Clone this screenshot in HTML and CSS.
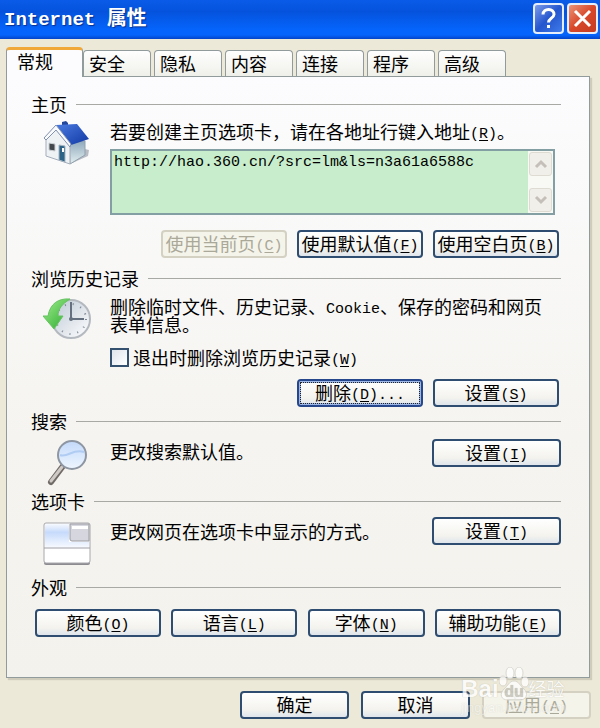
FILE: index.html
```html
<!DOCTYPE html>
<html lang="zh-CN">
  <head>
    <meta charset="UTF-8" />
    <meta name="viewport" content="width=device-width, initial-scale=1.0" />
    <title>Internet 属性</title>
    <link rel="stylesheet" href="styles.css">
  </head>
  <body>
    <!-- Title bar -->
    <header class="title-bar">
      <h1 class="title"><span class="title-latin">Internet </span>属性</h1>
      <button class="window-button help" type="button" aria-label="帮助">
        <svg width="27" height="27" viewBox="0 0 27 27">
          <path d="M8 9.500C8 2.500 19.500 3 19 9.500C18.800 13 13.500 13.500 13.500 17.500" fill="none" stroke="#fff" stroke-width="3" />
          <rect x="12" y="20" width="3" height="3" fill="#fff" />
        </svg>
      </button>
      <button class="window-button close" type="button" aria-label="关闭">
        <svg width="27" height="27" viewBox="0 0 27 27">
          <path d="M6 6L21 21M21 6L6 21" stroke="#fff" stroke-width="3" />
        </svg>
      </button>
    </header>

    <main>
      <!-- Tabs -->
      <nav class="tabs">
        <button class="tab active" type="button">常规</button>
        <button class="tab" type="button">安全</button>
        <button class="tab" type="button">隐私</button>
        <button class="tab" type="button">内容</button>
        <button class="tab" type="button">连接</button>
        <button class="tab" type="button">程序</button>
        <button class="tab" type="button">高级</button>
      </nav>

      <div class="panel">
        <!-- Home page -->
        <section class="group home">
          <h2 class="group-title">主页</h2>
          <div class="group-body">
            <svg class="icon" width="48" height="46" viewBox="0 0 48 46">
              <defs>
                <linearGradient id="roof" x1="0" y1="0" x2="1" y2="1">
                  <stop offset="0" stop-color="#4a7be0" />
                  <stop offset="1" stop-color="#1138a4" />
                </linearGradient>
                <linearGradient id="side" x1="0" y1="0" x2="0" y2="1">
                  <stop offset="0" stop-color="#8fa9bd" />
                  <stop offset="1" stop-color="#e4f0f0" />
                </linearGradient>
              </defs>
              <path d="M27 43L45 35L46 29L38 27Z" fill="#b9bcc4" />
              <path d="M26 22L42 20V34L27 43Z" fill="url(#side)" stroke="#90a0ae" />
              <path d="M3 17L13 5L27 21V43L3 35Z" fill="#eef2f5" stroke="#a4adb9" />
              <path d="M19 1L23 0L25 2V9H19Z" fill="#21469b" />
              <path d="M13 4L34 3L46 18L28 24Z" fill="url(#roof)" />
              <path d="M1 17L13 4L28 23L27 26L13 9L3 19Z" fill="#f9fbff" stroke="#8191af" />
              <path d="M6 22L12 23V30L6 29Z" fill="#42464d" stroke="#cbd0d5" />
              <path d="M16 24L22 25V41L16 39Z" fill="#2c6387" stroke="#a5b5c2" />
              <path d="M20 27V31" stroke="#fff" stroke-width="2" />
            </svg>
            <div class="content">
              <label class="text" for="address">若要创建主页选项卡，请在各地址行键入地址<span class="key">(<u>R</u>)</span>。</label>
              <div class="address-box">
                <textarea id="address" class="address" spellcheck="false">http://hao.360.cn/?src=lm&amp;ls=n3a61a6588c</textarea>
                <div class="scrollbar">
                  <button class="scroll-button" type="button" aria-label="向上滚动">
                    <svg width="14" height="10" viewBox="0 0 14 10"><path d="M2 8L7 3L12 8" fill="none" stroke="#c5bfba" stroke-width="3" /></svg>
                  </button>
                  <button class="scroll-button" type="button" aria-label="向下滚动">
                    <svg width="14" height="10" viewBox="0 0 14 10"><path d="M2 2L7 7L12 2" fill="none" stroke="#c5bfba" stroke-width="3" /></svg>
                  </button>
                </div>
              </div>
            </div>
          </div>
          <div class="buttons">
            <button class="button" type="button" disabled>使用当前页<span class="key">(<u>C</u>)</span></button>
            <button class="button" type="button">使用默认值<span class="key">(<u>F</u>)</span></button>
            <button class="button" type="button">使用空白页<span class="key">(<u>B</u>)</span></button>
          </div>
        </section>

        <!-- Browsing history -->
        <section class="group history">
          <h2 class="group-title">浏览历史记录</h2>
          <div class="group-body">
            <svg class="icon" width="48" height="44" viewBox="0 0 48 44">
              <defs>
                <linearGradient id="dial" x1="0" y1="0" x2="1" y2="1">
                  <stop offset="0" stop-color="#bcc7d4" />
                  <stop offset="1" stop-color="#ffffff" />
                </linearGradient>
                <linearGradient id="arrow" x1="0" y1="0" x2="1" y2="1">
                  <stop offset="0" stop-color="#a1ee8e" />
                  <stop offset="1" stop-color="#28a82c" />
                </linearGradient>
              </defs>
              <circle cx="28" cy="22" r="19" fill="url(#dial)" stroke="#b4b9c0" stroke-width="2" />
              <circle cx="28" cy="22" r="15" fill="none" stroke="#7d8792" stroke-width="2" stroke-dasharray="1 7" />
              <path d="M28 5V22H41" fill="none" stroke="#647080" stroke-width="2" />
              <circle cx="28" cy="22" r="2" fill="#647080" />
              <path d="M27 2C15 1 7 7 5 19H0L11 32L20 19H15C15 12 19 7 27 2Z" fill="url(#arrow)" stroke="#65c360" />
            </svg>
            <div class="content">
              <p class="text paragraph">删除临时文件、历史记录、<span class="key">Cookie</span>、保存的密码和网页表单信息。</p>
              <label class="option">
                <input class="checkbox" type="checkbox" />
                <span>退出时删除浏览历史记录<span class="key">(<u>W</u>)</span></span>
              </label>
            </div>
          </div>
          <div class="buttons">
            <button class="button default" type="button">删除<span class="key">(<u>D</u>)...</span></button>
            <button class="button" type="button">设置<span class="key">(<u>S</u>)</span></button>
          </div>
        </section>

        <!-- Search -->
        <section class="group search">
          <h2 class="group-title">搜索</h2>
          <div class="group-body">
            <svg class="icon" width="48" height="48" viewBox="0 0 48 48">
              <defs>
                <linearGradient id="lens" x1="0" y1="0" x2="0" y2="1">
                  <stop offset="0" stop-color="#c3d9fa" />
                  <stop offset="1" stop-color="#eef6ff" />
                </linearGradient>
              </defs>
              <path d="M20 27L8 43" stroke="#716b68" stroke-width="6" stroke-linecap="round" />
              <path d="M19 28L8 42" stroke="#cfcac6" stroke-width="3" stroke-linecap="round" />
              <circle cx="29" cy="16" r="14" fill="url(#lens)" stroke="#8d96a2" stroke-width="2" />
              <path d="M17 16C25 19 30 9 41 13" fill="none" stroke="#b0ccf3" stroke-width="2" />
            </svg>
            <div class="content">
              <p class="text">更改搜索默认值。</p>
            </div>
            <button class="button wide" type="button">设置<span class="key">(<u>I</u>)</span></button>
          </div>
        </section>

        <!-- Tabbed browsing -->
        <section class="group browsing">
          <h2 class="group-title">选项卡</h2>
          <div class="group-body">
            <svg class="icon" width="48" height="44" viewBox="0 0 48 44">
              <defs>
                <linearGradient id="tab-fill" x1="0" y1="0" x2="0" y2="1">
                  <stop offset="0" stop-color="#f6f9ff" />
                  <stop offset="0.350" stop-color="#c6dafb" />
                  <stop offset="1" stop-color="#f9fbff" />
                </linearGradient>
              </defs>
              <rect x="1" y="2" width="46" height="41" rx="2" fill="#8c8c90" />
              <rect x="1" y="1" width="46" height="40" rx="2" fill="#fff" stroke="#a8a8ad" />
              <path d="M2 2H26V20H46V26H2Z" fill="url(#tab-fill)" />
              <path d="M27 2H46V19H29Q27 19 27 17Z" fill="#d6d6de" stroke="#9c9ca3" />
              <path d="M29 4H45V7H29Z" fill="#fff" />
              <path d="M1 26H47" stroke="#a0a0a7" />
            </svg>
            <div class="content">
              <p class="text">更改网页在选项卡中显示的方式。</p>
            </div>
            <button class="button wide" type="button">设置<span class="key">(<u>T</u>)</span></button>
          </div>
        </section>

        <!-- Appearance -->
        <section class="group appearance">
          <h2 class="group-title">外观</h2>
          <div class="appearance-buttons">
            <button class="button" type="button">颜色<span class="key">(<u>O</u>)</span></button>
            <button class="button" type="button">语言<span class="key">(<u>L</u>)</span></button>
            <button class="button narrow" type="button">字体<span class="key">(<u>N</u>)</span></button>
            <button class="button" type="button">辅助功能<span class="key">(<u>E</u>)</span></button>
          </div>
        </section>
      </div>
    </main>

    <!-- Dialog buttons -->
    <footer class="footer">
      <button class="button" type="button">确定</button>
      <button class="button" type="button">取消</button>
      <button class="button" type="button" disabled>应用<span class="key">(<u>A</u>)</span></button>
      <div class="watermark">
        <div class="brand">
          <span class="brand-latin">Bai</span>
          <svg width="30" height="34" viewBox="0 0 30 34">
            <g fill="#fff" stroke="#d4d2c9">
              <ellipse cx="4" cy="14" rx="4" ry="5" />
              <ellipse cx="11" cy="6" rx="4" ry="6" />
              <ellipse cx="20" cy="6" rx="4" ry="6" />
              <ellipse cx="26" cy="15" rx="4" ry="5" />
              <path d="M15 14C20 14 21 19 25 22C30 27 27 33 21 33C17 33 13 33 9 33C2 33 0 27 5 22C9 19 10 14 15 14Z" />
            </g>
            <text class="paw-text" x="15" y="30" text-anchor="middle">du</text>
          </svg>
          <span class="brand-name">经验</span>
        </div>
        <div class="brand-site">jingyan.baidu.com</div>
      </div>
    </footer>
  </body>
</html>
```
FILE: styles.css
```css
* {
  box-sizing: border-box;
}

body {
  display: flex;
  flex-direction: column;
  min-height: 100vh;
  margin: 0;
  background-color: #ece9d8;
  color: #000;
  font-family: "Noto Sans CJK SC", sans-serif;
  font-size: 18px;
  line-height: 20px;
}

button,
textarea {
  margin: 0;
  color: inherit;
  font: inherit;
}

h1,
h2,
p {
  margin: 0;
  font-size: inherit;
  font-weight: normal;
}

/* Title bar */
.title-bar {
  display: flex;
  align-items: center;
  gap: 3px;
  height: 39px;
  padding: 0 2px 2px 4px;
  background: linear-gradient(#0a5be8, #0553dd 30%, #0564fb 75%, #0564fb 90%, #0343c8);
}

.title {
  flex: 1;
  color: #fff;
  font-size: 20px;
  font-weight: bold;
  text-shadow: 1px 1px 1px #062f8e;
  white-space: pre;
}

.title-latin {
  font-family: "Liberation Mono", monospace;
  font-size: 19px;
}

.window-button {
  display: flex;
  justify-content: center;
  align-items: center;
  width: 31px;
  height: 31px;
  padding: 0;
  border: 2px solid #e6edfb;
  border-radius: 4px;
}

.help {
  background: linear-gradient(135deg, #7d9cea, #2556ce 50%, #3e7bea);
}

.close {
  background: linear-gradient(135deg, #ec9477, #d8472a 50%, #c43c22);
}

main {
  padding: 9px 10px 0 6px;
}

/* Tabs */
.tabs {
  display: flex;
  align-items: flex-end;
  gap: 3px;
  height: 28px;
}

.tab {
  width: 68px;
  height: 26px;
  padding: 0 0 2px 5px;
  border: 1px solid #919b9c;
  border-bottom: 0;
  border-radius: 4px 4px 0 0;
  background: linear-gradient(#fefefe, #f0f0ea);
  text-align: left;
}

.tab.active {
  position: relative;
  z-index: 1;
  width: 77px;
  height: 30px;
  margin: 0 -3px -1px 0;
  padding: 0 0 5px 10px;
  border-top: 3px solid #f0a838;
  background: #fcfcfe;
}

/* Panel */
.panel {
  padding: 17px 28px 40px 24px;
  border: 1px solid #919b9c;
  box-shadow: 2px 2px 1px #cfccbc;
  background: linear-gradient(#fcfcfe, #f5f4f0 60%, #f3f2ed);
}

.group-title {
  display: flex;
  align-items: center;
  gap: 9px;
}

.group-title::after {
  content: "";
  flex: 1;
  height: 1px;
  background-color: #a8a8a5;
}

.group-body {
  display: flex;
  align-items: flex-start;
  padding-left: 12px;
}

.icon {
  flex: none;
  margin-right: 19px;
}

.content {
  flex: 1;
}

.text {
  display: block;
}

.key {
  font-family: "Liberation Mono", monospace;
  font-size: 15px;
  line-height: 0;
  vertical-align: 1px;
}

.key u {
  text-underline-offset: 2px;
}

/* Buttons */
.button {
  width: 126px;
  height: 28px;
  padding: 0 0 2px;
  border: 2px solid #2e4d70;
  border-radius: 4px;
  background: linear-gradient(#fff, #f4f3ee 70%, #dfe5ec);
  white-space: nowrap;
}

.button:disabled {
  border-color: #d4d1c3;
  background: #f5f4ea;
  color: #aaa899;
}

.button.default {
  outline: 1px dotted #222;
  outline-offset: -4px;
  border-color: #26478b;
  box-shadow: inset 0 0 0 2px #9db8e8;
}

.button.wide {
  width: 129px;
}

.buttons {
  display: flex;
  justify-content: flex-end;
  gap: 10px;
  padding-right: 2px;
}

/* Home page */
.home .group-body {
  padding-top: 7px;
}

.address-box {
  display: flex;
  height: 66px;
  margin: 8px 6px 0 0;
  border: 2px solid #839fa3;
  background-color: #c7edcc;
}

.address {
  flex: 1;
  min-width: 0;
  padding: 2px;
  border: 0;
  outline: 0;
  resize: none;
  background: transparent;
  font-family: "Liberation Mono", monospace;
  font-size: 15px;
  overflow: hidden;
}

.scrollbar {
  display: flex;
  flex-direction: column;
  justify-content: space-between;
  width: 25px;
  padding: 1px;
  background-color: #f8f8f4;
}

.scroll-button {
  display: flex;
  justify-content: center;
  align-items: center;
  height: 24px;
  padding: 0;
  border: 1px solid #dedbd2;
  border-radius: 3px;
  background-color: #f1efe9;
}

.home .buttons {
  padding-top: 15px;
}

/* Browsing history */
.history {
  padding-top: 10px;
}

.history .group-body {
  padding-top: 9px;
}

.paragraph {
  padding-right: 16px;
  line-height: 18px;
}

.option {
  display: flex;
  align-items: center;
  gap: 4px;
  padding-top: 14px;
}

.checkbox {
  appearance: none;
  width: 19px;
  height: 19px;
  margin: 0;
  border: 2px solid #34516f;
  background: linear-gradient(135deg, #dfe5ec, #fff);
}

.history .buttons {
  padding-top: 12px;
}

/* Search */
.search {
  padding-top: 4px;
}

.search .group-body {
  padding-top: 8px;
}

.search .text {
  padding-top: 2px;
}

/* Tabbed browsing */
.browsing {
  padding-top: 4px;
}

.browsing .group-body {
  padding-top: 6px;
}

.browsing .icon {
  margin-top: 5px;
}

.browsing .text {
  padding-top: 4px;
}

/* Appearance */
.appearance {
  padding-top: 11px;
}

.appearance-buttons {
  display: flex;
  justify-content: space-between;
  padding: 12px 0 0 4px;
}

.button.narrow {
  width: 117px;
}

/* Dialog buttons */
.footer {
  position: relative;
  display: flex;
  justify-content: flex-end;
  gap: 12px;
  padding: 13px 9px 9px;
}

.footer .button {
  width: 109px;
}

.watermark {
  position: absolute;
  right: 34px;
  bottom: 13px;
  color: #fff;
  opacity: 0.8;
  text-shadow: 0 0 1px #aaa89c;
  pointer-events: none;
}

.brand {
  display: flex;
  align-items: flex-end;
}

.brand-latin {
  font-family: "Liberation Sans", sans-serif;
  font-size: 24px;
  font-weight: bold;
  line-height: 24px;
}

.brand-name {
  line-height: 26px;
}

.paw-text {
  fill: #c4c2b8;
  font-family: "Liberation Sans", sans-serif;
  font-size: 16px;
  font-weight: bold;
}

.brand-site {
  font-family: "Liberation Sans", sans-serif;
  font-size: 13px;
  line-height: 14px;
  opacity: 0.5;
}
```
